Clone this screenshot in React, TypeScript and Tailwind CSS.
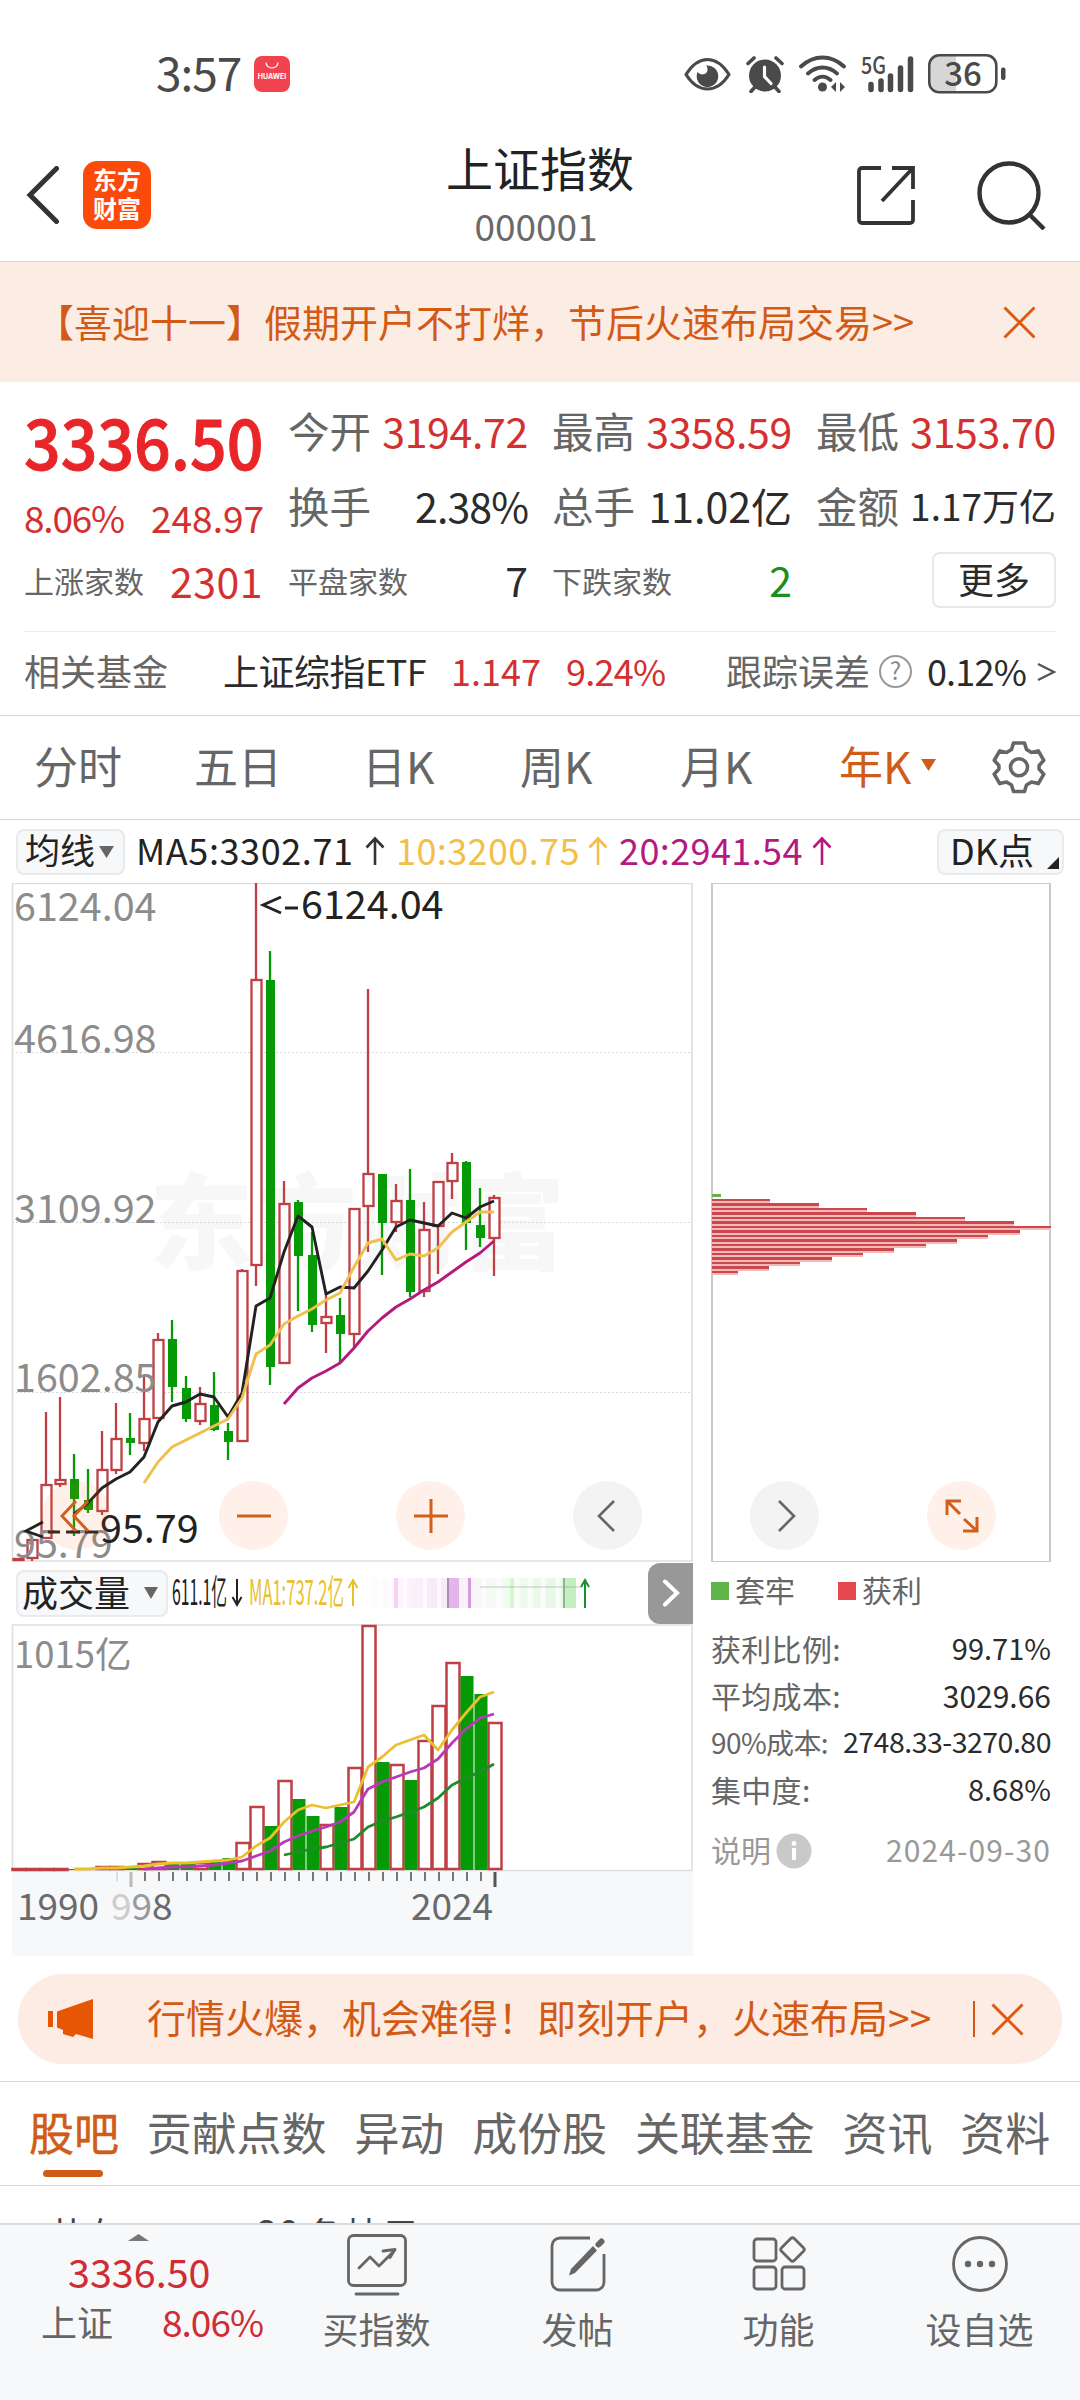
import * as React from 'react';

type Candle = {
  up: boolean;
  high: number;
  top: number;
  bottom: number;
  low: number;
};

const up = (high: number, top: number, bottom: number, low: number): Candle => ({ up: true, high, top, bottom, low });
const down = (high: number, top: number, bottom: number, low: number): Candle => ({ up: false, high, top, bottom, low });

// One entry per year, 1990 - 2024, in chart units
const candles: Candle[] = [
  up(1558, 1558, 1561, 1561),
  up(1539, 1539, 1559, 1561),
  up(1412, 1484, 1539, 1539),
  up(1397, 1479, 1485, 1487),
  down(1454, 1479, 1499, 1536),
  down(1469, 1500, 1510, 1513),
  up(1431, 1469, 1512, 1515),
  up(1403, 1438, 1471, 1474),
  down(1413, 1438, 1443, 1455),
  up(1375, 1418, 1444, 1451),
  up(1333, 1339, 1419, 1419),
  down(1320, 1339, 1387, 1402),
  down(1376, 1388, 1419, 1422),
  up(1387, 1403, 1422, 1425),
  down(1372, 1405, 1430, 1431),
  down(1423, 1431, 1442, 1460),
  up(1269, 1270, 1442, 1442),
  up(883, 979, 1266, 1286),
  down(951, 980, 1367, 1385),
  up(1181, 1203, 1364, 1364),
  down(1200, 1202, 1256, 1311),
  down(1232, 1255, 1325, 1332),
  up(1293, 1316, 1324, 1353),
  down(1298, 1315, 1334, 1363),
  up(1208, 1208, 1335, 1348),
  up(989, 1173, 1207, 1252),
  down(1174, 1174, 1223, 1275),
  up(1184, 1200, 1223, 1232),
  down(1169, 1200, 1292, 1297),
  up(1202, 1229, 1292, 1297),
  up(1181, 1181, 1227, 1274),
  up(1153, 1162, 1182, 1199),
  down(1161, 1162, 1223, 1250),
  down(1188, 1225, 1238, 1247),
  up(1195, 1197, 1239, 1276),
];

const ma5 = [
  1514, 1503, 1488, 1479, 1472, 1457, 1422, 1406, 1402, 1394, 1397, 1417, 1393, 1306, 1298, 1252, 1216, 1227, 1294,
  1287, 1288, 1271, 1250, 1227, 1220, 1223, 1226, 1213, 1218, 1207, 1201,
];
const ma10 = [
  1483, 1462, 1447, 1440, 1433, 1426, 1419, 1398, 1354, 1345, 1324, 1316, 1309, 1300, 1293, 1267, 1243, 1239, 1260,
  1254, 1256, 1248, 1232, 1222, 1212, 1212,
];
const ma20 = [1404, 1388, 1378, 1371, 1363, 1348, 1331, 1318, 1307, 1299, 1290, 1282, 1272, 1262, 1253, 1241];

// Top edge of each volume bar
const volumes = [
  1868, 1868, 1868, 1868, 1869, 1869, 1866, 1866, 1866, 1863, 1861, 1863, 1864, 1862, 1860, 1858, 1842, 1806, 1826,
  1780, 1799, 1816, 1824, 1807, 1767, 1625, 1762, 1764, 1780, 1740, 1705, 1662, 1676, 1694, 1722,
];
const volMa5 = [
  1869, 1869, 1868, 1868, 1867, 1866, 1864, 1863, 1863, 1862, 1861, 1860, 1857, 1846, 1838, 1822, 1810, 1805, 1808,
  1805, 1802, 1767, 1757, 1745, 1740, 1735, 1750, 1730, 1713, 1697, 1692,
];
const volMa10 = [
  1869, 1868, 1867, 1867, 1866, 1865, 1863, 1861, 1856, 1851, 1842, 1836, 1831, 1827, 1822, 1812, 1789, 1782, 1777,
  1772, 1768, 1759, 1743, 1729, 1718, 1714,
];
const volMa20 = [1855, 1852, 1849, 1847, 1843, 1839, 1827, 1821, 1817, 1812, 1807, 1798, 1785, 1778, 1772, 1764];

const chips = [9, 58, 107, 155, 204, 253, 302, 339, 308, 276, 245, 214, 182, 151, 120, 88, 57, 26];

const xAt = (i: number) => 18 + 14 * i;

const linePoints = (values: number[]) => {
  const start = candles.length - values.length;
  return values.map((y, i) => `${xAt(start + i)},${y}`).join(' ');
};

function StatusBar() {
  return (
    <div className="flex h-[128px] items-center pt-5 pl-[156px] text-[#4a4a4a]">
      <span className="w-[98px] text-[46px] leading-[50px] tracking-[-1px] -translate-y-[3px]">3:57</span>
      <svg width="36" height="36" viewBox="0 0 36 36">
        <rect width="36" height="36" rx="8" fill="#f0434f" />
        <path d="M12 6.5a6 5.5 0 0 0 12 0" fill="none" stroke="#fff" strokeWidth="1.2" />
        <text x="18" y="23" textAnchor="middle" fontSize="7" fontWeight="700" fill="#fff" fontFamily="Inter, sans-serif">
          HUAWEI
        </text>
      </svg>
      <svg className="ml-[394px]" width="47" height="36" viewBox="0 0 47 36" fill="none" stroke="#4a4a4a" strokeWidth="3.2">
        <path d="M2 18.500C8 9 15 3.500 23.500 3.500S39 9 45 18.500C39 28 32 33 23.500 33S8 28 2 18.500Z" strokeLinejoin="round" />
        <path d="M22 9.500a10.800 10.800 0 1 1-8.500 6.500c3 4 10 3 10-2.500 0-1.800-.5-3-1.500-4Z" fill="#4a4a4a" stroke="none" />
      </svg>
      <svg className="ml-[15px]" width="38" height="38" viewBox="0 0 38 38">
        <circle cx="19" cy="20.500" r="16" fill="#4a4a4a" />
        <path d="M2 8.500 8 3M36 8.500 30 3M9 32l-4 4.500M29 32l4 4.500" stroke="#4a4a4a" strokeWidth="3.600" strokeLinecap="round" />
        <path d="M18.500 12v9.500l6.500 7" fill="none" stroke="#fff" strokeWidth="3.200" strokeLinecap="round" />
      </svg>
      <svg className="ml-[15px]" width="47" height="38" viewBox="0 0 47 38" fill="none" stroke="#4a4a4a" strokeWidth="3.800" strokeLinecap="round">
        <path d="M2 11.500C15-.5 32-.5 45 11.500M9 18.500c9-8 20-8 29 0M15.500 25c5-4.500 11-4.500 16 0" />
        <circle cx="23.500" cy="32" r="4.500" fill="#4a4a4a" stroke="none" />
        <path d="M37 27v10l-5-5ZM41 27v10l5-5Z" fill="#4a4a4a" stroke="none" />
      </svg>
      <svg className="ml-[15px] overflow-visible" width="54" height="38" viewBox="0 0 54 38">
        <text x="0" y="19" fontSize="24" fontWeight="500" fill="#4a4a4a" textLength="25" lengthAdjust="spacingAndGlyphs">
          5G
        </text>
        <path d="M10 29.500v5M20 26v8.500M29.500 21v13.500M39.500 13v21.500M49.500 4v30.500" stroke="#4a4a4a" strokeWidth="5.500" strokeLinecap="round" />
      </svg>
      <svg className="ml-[13px]" width="80" height="42" viewBox="0 0 80 42">
        <path d="M12 3h16v36H12a9 9 0 0 1-9-9V12a9 9 0 0 1 9-9Z" fill="#d6d6d6" />
        <rect x="1.300" y="2.300" width="67" height="37" rx="10" fill="none" stroke="#4a4a4a" strokeWidth="2.600" />
        <rect x="73" y="14.500" width="4.500" height="12.500" rx="2" fill="#4a4a4a" />
        <text x="35" y="32.500" textAnchor="middle" fontSize="33" fontWeight="500" fill="#4a4a4a">
          36
        </text>
      </svg>
    </div>
  );
}

function Header() {
  return (
    <header className="flex h-[133px] items-center pr-[33px] pl-[26px]">
      <div className="flex w-[420px] items-center">
        <svg width="34" height="58" viewBox="0 0 34 58" fill="none" stroke="#333" strokeWidth="5">
          <path d="M30.500 2.500 4 29l26.500 26.500" strokeLinecap="round" />
        </svg>
        <div className="ml-[23px] flex h-[68px] w-[68px] flex-col items-center justify-center rounded-[14px] bg-[#fb4a0a] pb-[3px] text-[24px] leading-[29px] font-bold text-white">
          <span>东方</span>
          <span>财富</span>
        </div>
      </div>
      <div className="flex w-[188px] flex-col items-center pt-[2px] leading-[59px] whitespace-nowrap">
        <h1 className="text-[47px] text-[#222]">上证指数</h1>
        <span className="pr-[8px] text-[37px] text-[#6a6a6a]">000001</span>
      </div>
      <div className="flex grow items-center justify-end gap-[62px]">
        <svg width="58" height="60" viewBox="0 0 58 60" fill="none" stroke="#333" strokeWidth="3.800">
          <path d="M24 3H5a3 3 0 0 0-3 3v49a3 3 0 0 0 3 3h48a3 3 0 0 0 3-3V35" />
          <path d="M35 3h21v21M55 4 25 36" />
        </svg>
        <svg width="70" height="70" viewBox="0 0 70 70" fill="none" stroke="#333" strokeWidth="4.400">
          <circle cx="32" cy="33" r="29.500" />
          <path d="M52 54l15 15" />
        </svg>
      </div>
    </header>
  );
}

function CloseIcon() {
  return (
    <svg width="33" height="33" viewBox="0 0 33 33" stroke="#dd5a12" strokeWidth="3">
      <path d="M1.500 1.500l30 30M31.500 1.500l-30 30" />
    </svg>
  );
}

function Stat({ label, value, valueClass }: { label: string; value: string; valueClass: string }) {
  return (
    <div className="flex w-[240px] items-center justify-between">
      <span className="text-[41.500px] translate-y-px text-[#666]">{label}</span>
      <span className={valueClass}>{value}</span>
    </div>
  );
}

function Quote() {
  const red = 'text-[41px] tracking-[-0.3px] translate-y-px text-[#d3302f]';
  return (
    <section className="flex h-[249px] whitespace-nowrap pt-[10px] pl-6">
      <div className="w-[264px]">
        <div className="flex h-[94px] w-[239px] items-center text-[#e82528]">
          <span className="origin-left translate-y-px scale-x-[0.92] text-[70px] font-medium [-webkit-text-stroke:1px_#e82528]">
            3336.50
          </span>
        </div>
        <div className="flex h-[62px] w-[240px] items-center justify-between text-[37px] text-[#d3302f]">
          <span className="tracking-[-1.2px]">8.06%</span>
          <span>248.97</span>
        </div>
        <div className="flex h-[64px] w-[239px] items-center justify-between">
          <span className="text-[30px] text-[#666]">上涨家数</span>
          <span className="text-[41px] tracking-[0.5px] text-[#d3302f]">2301</span>
        </div>
      </div>
      <div className="grid auto-rows-[75px] grid-cols-[repeat(3,240px)] items-center gap-x-[24px]">
        <Stat label="今开" value="3194.72" valueClass={red} />
        <Stat label="最高" value="3358.59" valueClass={red} />
        <Stat label="最低" value="3153.70" valueClass={red} />
        <Stat label="换手" value="2.38%" valueClass="text-[41px] tracking-[-0.9px] translate-y-px text-[#2b2b2b]" />
        <Stat label="总手" value="11.02亿" valueClass="text-[41px] translate-y-px text-[#2b2b2b]" />
        <Stat label="金额" value="1.17万亿" valueClass="text-[37px] translate-y-px text-[#2b2b2b]" />
        <div className="flex items-center justify-between">
          <span className="text-[30px] text-[#666]">平盘家数</span>
          <span className="text-[41px] text-[#2b2b2b]">7</span>
        </div>
        <div className="flex items-center justify-between">
          <span className="text-[30px] text-[#666]">下跌家数</span>
          <span className="text-[41px] text-[#1a8f1a]">2</span>
        </div>
        <div className="flex justify-end">
          <button className="flex h-[56px] w-[124px] items-center justify-center rounded-lg border-2 border-[#e8e8e8] pb-1 text-[36px] text-[#2b2b2b]">
            更多
          </button>
        </div>
      </div>
    </section>
  );
}

function FundRow() {
  return (
    <div className="flex h-[84px] items-center border-b border-[#d9d9d9] px-6 pb-[8px] text-[36px] whitespace-nowrap text-[#2b2b2b]">
      <span className="w-[199px] text-[#666]">相关基金</span>
      <span className="w-[228px] tracking-[-0.5px]">上证综指ETF</span>
      <span className="w-[115px] text-[#d3302f]">1.147</span>
      <span className="w-[160px] tracking-[-0.7px] text-[#d3302f]">9.24%</span>
      <span className="w-[152px] text-[#666]">跟踪误差</span>
      <svg className="mt-1" width="35" height="35" viewBox="0 0 35 35">
        <circle cx="17.500" cy="17.500" r="15.500" fill="none" stroke="#999" strokeWidth="2" />
        <text x="17.500" y="26" textAnchor="middle" fontSize="24" fill="#888">
          ?
        </text>
      </svg>
      <span className="ml-[14px] tracking-[-0.8px]">0.12%</span>
      <svg className="mt-1 ml-[11px]" width="19" height="20" viewBox="0 0 19 20" fill="none" stroke="#555" strokeWidth="2.400">
        <path d="M1 2l16 8L1 18" />
      </svg>
    </div>
  );
}

function PeriodTabs() {
  return (
    <nav className="flex h-[104px] items-center border-b border-[#d9d9d9] pb-[5px] pl-[34px] text-[44px] whitespace-nowrap text-[#666]">
      <span className="w-[160px]">分时</span>
      <span className="w-[168px]">五日</span>
      <span className="w-[158px]">日K</span>
      <span className="w-[160px]">周K</span>
      <span className="w-[159px]">月K</span>
      <span className="text-[#cf5c18]">年K</span>
      <svg className="ml-[10px]" width="15" height="12" viewBox="0 0 15 12">
        <path d="M0 0h15L7.500 12Z" fill="#cf5c18" />
      </svg>
      <svg className="mt-1 ml-[56px]" width="54" height="54" viewBox="0 0 54 54" fill="none" stroke="#666" strokeWidth="3.600" strokeLinejoin="round">
        <path d="M21.500 3h11l2 6.500 5 3 6.800-1.600 5.500 9.400-4.700 5.200v3.500l4.700 5.200-5.500 9.400-6.800-1.600-5 3-2 6.500h-11l-2-6.500-5-3-6.800 1.600-5.500-9.400 4.700-5.200v-3.500l-4.700-5.200 5.500-9.400 6.800 1.600 5-3Z" />
        <circle cx="27" cy="27.300" r="8.500" />
      </svg>
    </nav>
  );
}

function IndicatorRow() {
  return (
    <div className="flex h-[63px] items-center pl-4 text-[36px] whitespace-nowrap">
      <div className="flex h-[46px] w-[109px] shrink-0 items-center rounded-lg border-2 border-[#e9eaec] bg-[#f7f8fa] pl-[7px] text-[35px] text-[#222]">
        <span className="-translate-y-[3px]">均线</span>
        <svg className="ml-[4px]" width="15" height="12" viewBox="0 0 15 12">
          <path d="M0 0h15L7.500 12Z" fill="#666" />
        </svg>
      </div>
      <span className="ml-[11px] w-[228px] tracking-[0.6px] -translate-y-[3px] text-[#222]">MA5:3302.71</span>
      <UpArrow color="#333" />
      <span className="ml-[10px] w-[191px] tracking-[0.4px] -translate-y-[3px] text-[#f3bf4b]">10:3200.75</span>
      <UpArrow color="#f3bf4b" />
      <span className="ml-[10px] w-[192px] tracking-[0.4px] -translate-y-[3px] text-[#b5197f]">20:2941.54</span>
      <UpArrow color="#b5197f" />
      <div className="mr-[16px] ml-auto flex h-[46px] w-[127px] items-center rounded-lg border-2 border-[#e9eaec] bg-[#f7f8fa] pl-[11px] text-[#222]">
        <span className="w-[97px] -translate-y-[3px]">DK点</span>
        <svg className="mt-[22px]" width="12" height="12" viewBox="0 0 12 12">
          <path d="M12 0v12H0Z" fill="#222" />
        </svg>
      </div>
    </div>
  );
}

function UpArrow({ color }: { color: string }) {
  return (
    <svg className="-translate-y-px" width="22" height="30" viewBox="0 0 22 30" fill="none" stroke={color} strokeWidth="2.600">
      <path d="M11 29V3M2.500 11.500 11 2.500l8.500 9" />
    </svg>
  );
}

function PriceChart() {
  return (
    <svg className="block" width="705" height="679" viewBox="0 883 705 679">
      <text x="149" y="1262" fontSize="104" fontWeight="900" fill="#f7f7f7">
        东方财富
      </text>
      <g stroke="#d8d8d8" strokeDasharray="2 2">
        <path d="M12 1052.500h680M12 1222.500h680M12 1392.500h680" />
      </g>
      <path d="M12.500 1561V883.500H692V1561Z" fill="none" stroke="#dedede" strokeWidth="1.600" />
      {candles.map((c, i) => {
        const x = xAt(i);
        const color = c.up ? '#bf3f45' : '#069a06';
        return (
          <g key={i} stroke={color} strokeWidth="2.300">
            <path d={`M${x} ${c.high}V${c.top}M${x} ${c.bottom}V${c.low}`} />
            {c.up ? (
              <rect x={x - 4.5} y={c.top + 1} width="10" height={Math.max(c.bottom - c.top - 2, 1)} fill="#fff" />
            ) : (
              <rect x={x - 4} y={c.top} width="9" height={c.bottom - c.top} fill={color} stroke="none" />
            )}
          </g>
        );
      })}
      <g fill="none" strokeWidth="2.900" strokeLinejoin="round">
        <polyline points={linePoints(ma5)} stroke="#222" />
        <polyline points={linePoints(ma10)} stroke="#efc04e" />
        <polyline points={linePoints(ma20)} stroke="#b5197f" />
      </g>
      <g fontSize="39.500" fill="#8c8c8c">
        <text x="14" y="921">6124.04</text>
        <text x="14" y="1053">4616.98</text>
        <text x="14" y="1223">3109.92</text>
        <text x="14" y="1392">1602.85</text>
        <text x="14" y="1558">95.79</text>
      </g>
      <g fontSize="39.500" fill="#222">
        <text x="301" y="919">6124.04</text>
        <text x="100" y="1543">95.79</text>
      </g>
      <g fill="none" stroke="#222" strokeWidth="2.800">
        <path d="M281 897l-18 8 18 8M285 908h13" />
        <path d="M43 1522l-17 9 17 6M48 1532h12M66 1532h14M85 1532h13" />
      </g>
    </svg>
  );
}

function VolumeHeader() {
  return (
    <div className="flex h-[62px] items-center pl-4 whitespace-nowrap">
      <div className="flex h-[47px] w-[152px] items-center rounded-lg border-2 border-[#e9eaec] bg-[#f7f8fa] pl-1 text-[36px] text-[#222]">
        <span className="-translate-y-[2px]">成交量</span>
        <svg className="ml-[14px]" width="14" height="12" viewBox="0 0 14 12">
          <path d="M0 0h14L7 12Z" fill="#666" />
        </svg>
      </div>
      <svg className="ml-1" width="422" height="44" viewBox="172 1571 422 44">
        <text x="172" y="1605" fontSize="35" fill="#222" textLength="55" lengthAdjust="spacingAndGlyphs">
          611.1亿
        </text>
        <path d="M237 1579v25M232.500 1597l4.500 8 4.500-8" fill="none" stroke="#222" strokeWidth="2" />
        <text x="249" y="1605" fontSize="35" fill="#e8c02c" textLength="95" lengthAdjust="spacingAndGlyphs">
          MA1:737.2亿
        </text>
        <path d="M353 1606v-25M348.500 1588l4.500-8 4.500 8" fill="none" stroke="#e8c02c" strokeWidth="2" />
        <defs>
          <linearGradient id="trail">
            <stop offset="0" stopColor="#faf0fa" stopOpacity="0.1" />
            <stop offset="0.350" stopColor="#f8e8f9" />
            <stop offset="0.500" stopColor="#faf3fa" />
            <stop offset="0.620" stopColor="#f3fcf3" />
            <stop offset="0.900" stopColor="#e8f8e8" />
            <stop offset="1" stopColor="#eafaea" />
          </linearGradient>
        </defs>
        <rect x="364" y="1578" width="212" height="30" fill="url(#trail)" />
        <path d="M369 1578v30M381 1578v30M390 1578v30M405 1578v30M425 1578v30M439 1578v30" stroke="#fff" strokeOpacity="0.700" strokeWidth="4" />
        <path d="M484 1578v30M499 1578v30M517 1578v30M530 1578v30M543 1578v30M558 1578v30" stroke="#fff" strokeOpacity="0.700" strokeWidth="5" />
        <path d="M396 1578v30" stroke="#f5d3f5" strokeWidth="4" />
        <path d="M512 1578v30" stroke="#d5f7d0" strokeWidth="4" />
        <rect x="447" y="1578" width="12" height="30" fill="#e2b6e8" />
        <path d="M448 1578v30" stroke="#a07ba8" strokeWidth="1.500" />
        <path d="M469.500 1578v30" stroke="#d39bd8" strokeWidth="3" />
        <rect x="563" y="1578" width="13" height="30" fill="#c4efc0" />
        <path d="M564 1578v30" stroke="#7aa57a" strokeWidth="1.500" />
        <path d="M480 1587h102" stroke="#7a9a7a" strokeOpacity="0.250" strokeWidth="2" />
        <path d="M585 1608v-28M581 1587l4-7 4 7" fill="none" stroke="#1b8f2a" strokeWidth="2" />
      </svg>
      <div className="ml-auto mr-[12px] flex h-[61px] w-[45px] items-center justify-center rounded-l-xl bg-[#989898]">
        <svg width="18" height="28" viewBox="0 0 18 28" fill="none" stroke="#fff" strokeWidth="4" strokeLinecap="round">
          <path d="M3 2.500 15 14 3 25.500" />
        </svg>
      </div>
    </div>
  );
}

function VolumeChart() {
  return (
    <svg className="block" width="705" height="332" viewBox="0 1624 705 332">
      <rect x="12" y="1871" width="681" height="85" fill="#f7f8fa" />
      <path d="M12.500 1870.500V1625H692v245.500Z" fill="none" stroke="#dedede" strokeWidth="1.600" />
      <text x="14" y="1668" fontSize="36.500" fill="#8c8c8c">
        1015亿
      </text>
      {volumes.map((top, i) => {
        const x = xAt(i);
        const height = Math.max(1870 - top, 1);
        if (candles[i].up) {
          return (
            <rect key={i} x={x - 5.5} y={top + 1} width="13" height={Math.max(height - 2, 1)} fill="#fff" stroke="#bf3f45" strokeWidth="2.500" />
          );
        }
        return <rect key={i} x={x - 5.5} y={top} width="13" height={height} fill="#069a06" />;
      })}
      <g fill="none" strokeWidth="2.800" strokeLinejoin="round">
        <polyline points={linePoints(volMa20)} stroke="#1e8c28" />
        <polyline points={linePoints(volMa10)} stroke="#b93ab8" />
        <polyline points={linePoints(volMa5)} stroke="#eac02f" />
      </g>
      <g stroke="#777" strokeWidth="2">
        <path d="M117 1872v9" stroke="#ddd" />
        <path d="M131 1872v15" stroke="#bbb" strokeWidth="3" />
        {Array.from({ length: 25 }, (_, n) => (
          <path key={n} d={`M${145 + 14 * n} 1872v9`} />
        ))}
        <path d="M495 1872v15" stroke="#555" strokeWidth="3" />
      </g>
      <g fontSize="37" fill="#6a6a6a">
        <text x="17" y="1920">1990</text>
        <text x="411" y="1920">2024</text>
        <text x="111" y="1920">
          <tspan fill="#ccc">9</tspan>
          <tspan fill="#999">9</tspan>
          <tspan>8</tspan>
        </text>
      </g>
    </svg>
  );
}

function ChipPanel() {
  const rows = [
    { label: '获利比例:', value: '99.71%', labelClass: 'tracking-[0.3px]', valueClass: 'text-[29px]' },
    { label: '平均成本:', value: '3029.66', labelClass: 'tracking-[0.3px]', valueClass: 'text-[30px]' },
    { label: '90%成本:', value: '2748.33-3270.80', labelClass: 'text-[28px] tracking-[-0.6px]', valueClass: 'text-[28.500px] tracking-[-0.5px]' },
    { label: '集中度:', value: '8.68%', labelClass: 'tracking-[0.3px]', valueClass: 'text-[29px]' },
  ];
  return (
    <div className="ml-[6px] w-[340px] whitespace-nowrap">
      <div className="h-[679px] border-x-2 border-y border-[#c9c9c9] pt-[310px]">
        <div className="-ml-px flex h-[80px] flex-col gap-[2px]">
          {chips.map((w, i) => (
            <div
              key={i}
              className={
                i === 0
                  ? 'h-[2.500px] shrink-0 bg-[#68b050]'
                  : 'h-[2.500px] shrink-0 bg-[#c9474d] shadow-[0_2px_0_#f3b9b9]'
              }
              style={{ width: w }}
            />
          ))}
        </div>
      </div>
      <div className="flex h-[58px] items-center text-[30px] text-[#666]">
        <span className="h-[18px] w-[18px] bg-[#5fb548]" />
        <span className="ml-[6px] w-[103px] -translate-y-[2px]">套牢</span>
        <span className="h-[18px] w-[18px] bg-[#e5484f]" />
        <span className="ml-[6px] -translate-y-[2px]">获利</span>
      </div>
      <div className="pt-[4px] text-[30px] text-[#666]">
        {rows.map((row) => (
          <div key={row.label} className="flex h-[47px] items-center justify-between">
            <span className={row.labelClass}>{row.label}</span>
            <span className={`text-[#2b2b2b] ${row.valueClass}`}>{row.value}</span>
          </div>
        ))}
      </div>
      <div className="flex h-[73px] items-center text-[30px] text-[#999]">
        <span>说明</span>
        <svg className="ml-[5px] mt-1" width="36" height="36" viewBox="0 0 36 36">
          <circle cx="18" cy="18" r="17.500" fill="#c9c9c9" />
          <circle cx="18" cy="10.500" r="2.400" fill="#fff" />
          <path d="M18 15v12" stroke="#fff" strokeWidth="4" />
        </svg>
        <span className="ml-auto tracking-[1.1px]">2024-09-30</span>
      </div>
    </div>
  );
}

function ChartControls() {
  const base = 'flex h-[69px] w-[69px] items-center justify-center rounded-full';
  const orange = `${base} bg-[#ff6a20]/10`;
  const gray = `${base} bg-[#f3f3f3]`;
  return (
    <div className="absolute top-[598px] left-[42px] flex gap-[108px]">
      <button className={orange}>
        <svg className="-ml-1" width="30" height="32" viewBox="0 0 30 32" fill="none" stroke="#d2601c" strokeWidth="3">
          <path d="M16 1 2 16l14 15M28 1 14 16l14 15" />
        </svg>
      </button>
      <button className={orange}>
        <svg width="34" height="34" viewBox="0 0 34 34" stroke="#d2601c" strokeWidth="3">
          <path d="M0 17h34" />
        </svg>
      </button>
      <button className={orange}>
        <svg width="34" height="34" viewBox="0 0 34 34" stroke="#d2601c" strokeWidth="3">
          <path d="M0 17h34M17 0v34" />
        </svg>
      </button>
      <button className={gray}>
        <svg className="-ml-1" width="20" height="34" viewBox="0 0 20 34" fill="none" stroke="#666" strokeWidth="2.600">
          <path d="M18 2 3 17l15 15" />
        </svg>
      </button>
      <button className={gray}>
        <svg className="ml-1" width="20" height="34" viewBox="0 0 20 34" fill="none" stroke="#666" strokeWidth="2.600">
          <path d="M2 2l15 15L2 32" />
        </svg>
      </button>
      <button className={orange}>
        <svg width="34" height="34" viewBox="0 0 34 34" fill="none" stroke="#d2601c" strokeWidth="3">
          <path d="M2 16V2h14M2 2l13 13M32 18v14H18M32 32 19 20" />
        </svg>
      </button>
    </div>
  );
}

function PromoBanner() {
  return (
    <div className="mx-[18px] mt-[18px] flex h-[90px] items-center rounded-full bg-[#fcece3] pl-[30px] text-[#d35a14]">
      <svg width="46" height="42" viewBox="0 0 46 42" fill="#e65605">
        <path d="M0 13h5v16H0ZM9 13.500 45 1v40l-17-5-3 3-10-3v-4l-6-2.500Z" />
      </svg>
      <span className="ml-[53px] text-[39px] whitespace-nowrap -translate-y-[3px]">行情火爆，机会难得！即刻开户，火速布局&gt;&gt;</span>
      <span className="ml-[42px] mr-[16px] h-[36px] w-[1.500px] bg-[#d35a14]" />
      <CloseIcon />
    </div>
  );
}

function SectionTabs() {
  const tabs = ['贡献点数', '异动', '成份股', '关联基金', '资讯', '资料'];
  return (
    <nav className="mt-[17px] flex h-[105px] gap-7 border-y border-[#d9d9d9] pl-[29px] text-[45px] leading-[99px] tracking-[-0.1px] whitespace-nowrap text-[#666]">
      <div className="relative text-[#cf5c18] [-webkit-text-stroke:0.5px_#cf5c18]">
        股吧
        <span className="absolute bottom-[8px] left-[14px] h-[7px] w-[60px] rounded-full bg-[#cf5c18]" />
      </div>
      {tabs.map((tab) => (
        <span key={tab}>{tab}</span>
      ))}
    </nav>
  );
}

function NavItem({ label, children }: { label: string; children: React.ReactNode }) {
  return (
    <div className="flex w-[201px] flex-col items-center pt-[9px]">
      {children}
      <span className="mt-[5px] leading-[54px]">{label}</span>
    </div>
  );
}

function BottomBar() {
  return (
    <footer className="flex h-[177px] border-t-2 border-[#dcdcdc] bg-[#f7f8fa] text-[36px] whitespace-nowrap text-[#666]">
      <div className="w-[276px] pt-[9px]">
        <svg className="ml-[128px] block" width="21" height="7" viewBox="0 0 21 7">
          <path d="M0 7h21L10.500 0Z" fill="#777" />
        </svg>
        <div className="pl-[68px] text-[39.500px] leading-[60px] text-[#cf2c36]">3336.50</div>
        <div className="flex justify-between pr-[13px] pl-[41px] leading-[40px]">
          <span>上证</span>
          <span className="text-[37px] tracking-[-1px] text-[#cf2c36]">8.06%</span>
        </div>
      </div>
      <NavItem label="买指数">
        <svg width="60" height="62" viewBox="0 0 60 62" fill="none" stroke="#666" strokeWidth="2.800" strokeLinecap="round" strokeLinejoin="round">
          <rect x="1.500" y="1.500" width="57" height="50" rx="5" />
          <path d="M12 34l11-11 9 9 16-16M36 17l12-1.500-5 8M9 60h42" />
        </svg>
      </NavItem>
      <NavItem label="发帖">
        <svg width="58" height="62" viewBox="0 0 58 62" fill="none" stroke="#666" strokeWidth="2.800">
          <path d="M41 4H11a8 8 0 0 0-8 8v36a8 8 0 0 0 8 8h36a8 8 0 0 0 8-8V20" />
          <path d="M44 12l4 4.500-22 22.500-6 2.500 2-6.500Z" fill="#666" stroke="none" />
          <path d="M49.500 10.500l3-3" strokeWidth="6" strokeLinecap="round" />
        </svg>
      </NavItem>
      <NavItem label="功能">
        <svg width="54" height="62" viewBox="0 0 54 62" fill="none" stroke="#666" strokeWidth="2.800">
          <rect x="2" y="5" width="22" height="22" rx="3" />
          <rect x="2" y="33" width="22" height="22" rx="3" />
          <rect x="30" y="33" width="22" height="22" rx="3" />
          <rect x="31.500" y="6.500" width="18" height="18" rx="2.500" transform="rotate(45 40.500 15.500)" />
        </svg>
      </NavItem>
      <NavItem label="设自选">
        <svg width="58" height="62" viewBox="0 0 58 62">
          <circle cx="29" cy="30" r="26.500" fill="none" stroke="#666" strokeWidth="2.800" />
          <g fill="#666">
            <circle cx="17" cy="30" r="3.200" />
            <circle cx="29" cy="30" r="3.200" />
            <circle cx="41" cy="30" r="3.200" />
          </g>
        </svg>
      </NavItem>
    </footer>
  );
}

export default function App() {
  return (
    <div className="flex h-[2400px] w-[1080px] flex-col overflow-hidden bg-white font-['Noto_Sans_CJK_SC','Noto_Sans',sans-serif] leading-none">
      <StatusBar />
      <Header />
      <div className="flex h-[121px] items-center justify-between border-t border-[#e3d3ca] bg-[#fcede4] pr-[44px] pl-[36px] text-[38px] text-[#d35a14]">
        <span className="-translate-y-[1px] whitespace-nowrap">【喜迎十一】假期开户不打烊，节后火速布局交易&gt;&gt;</span>
        <CloseIcon />
      </div>
      <Quote />
      <div className="mx-6 h-px bg-[#ededed]" />
      <FundRow />
      <PeriodTabs />
      <IndicatorRow />
      <main className="relative flex">
        <div className="w-[705px]">
          <PriceChart />
          <VolumeHeader />
          <VolumeChart />
        </div>
        <ChipPanel />
        <ChartControls />
      </main>
      <PromoBanner />
      <SectionTabs />
      <div className="flex h-[37px] overflow-hidden pt-[30px] pl-[48px] text-[37px] whitespace-nowrap text-[#444]">
        <span className="w-[209px]">共有</span>
        <span className="w-[49px] -translate-y-[4px] tracking-[1px]">20</span>
        <span className="tracking-[1px]">条帖子</span>
      </div>
      <BottomBar />
    </div>
  );
}
